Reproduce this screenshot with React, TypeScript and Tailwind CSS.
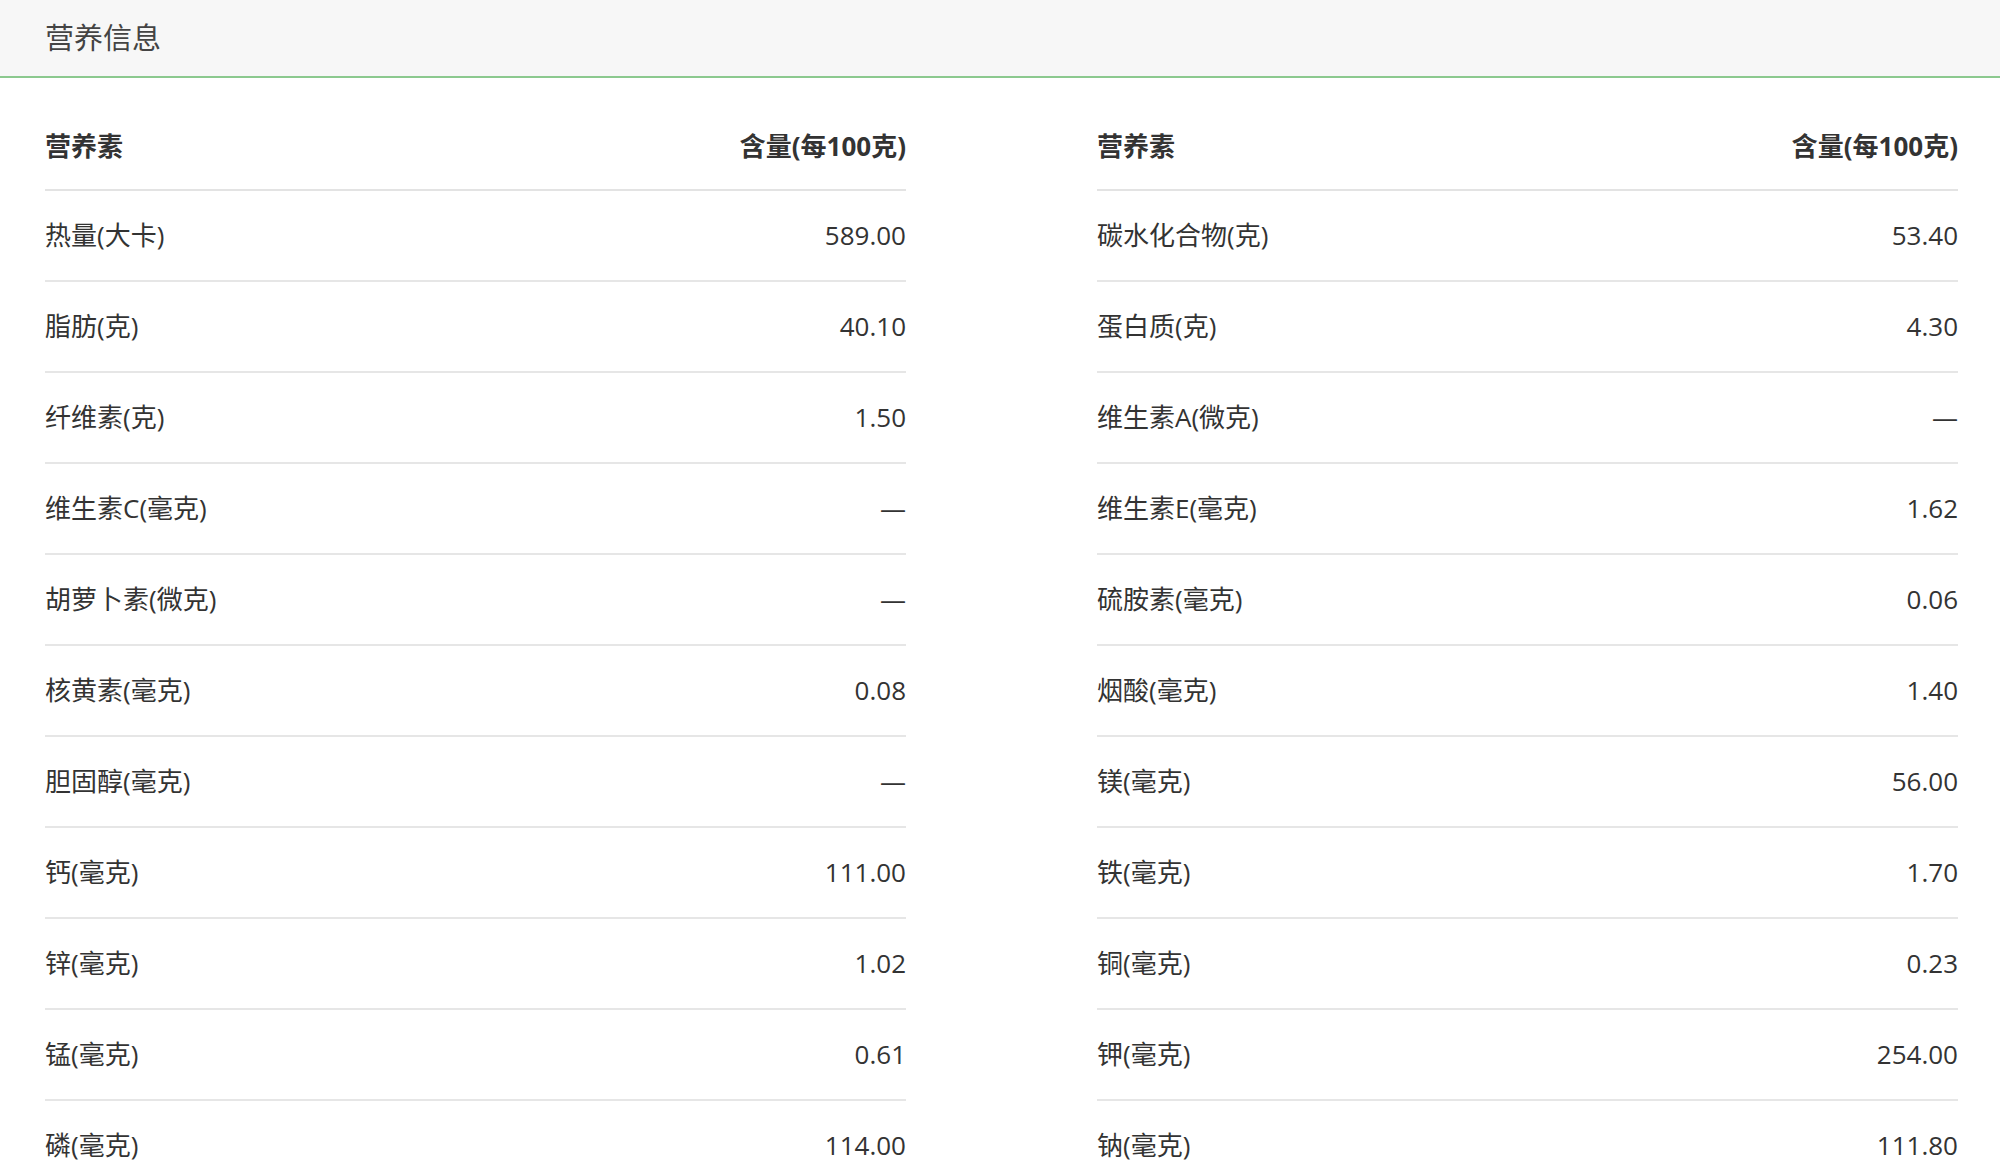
const rows: [string, string, string, string][] = [
  ["热量(大卡)", "589.00", "碳水化合物(克)", "53.40"],
  ["脂肪(克)", "40.10", "蛋白质(克)", "4.30"],
  ["纤维素(克)", "1.50", "维生素A(微克)", "—"],
  ["维生素C(毫克)", "—", "维生素E(毫克)", "1.62"],
  ["胡萝卜素(微克)", "—", "硫胺素(毫克)", "0.06"],
  ["核黄素(毫克)", "0.08", "烟酸(毫克)", "1.40"],
  ["胆固醇(毫克)", "—", "镁(毫克)", "56.00"],
  ["钙(毫克)", "111.00", "铁(毫克)", "1.70"],
  ["锌(毫克)", "1.02", "铜(毫克)", "0.23"],
  ["锰(毫克)", "0.61", "钾(毫克)", "254.00"],
  ["磷(毫克)", "114.00", "钠(毫克)", "111.80"],
];

function Table({ side }: { side: 0 | 1 }) {
  return (
    <div className="w-[861px]">
      <div className="flex h-[88px] items-center justify-between border-b-2 border-[#e3e3e3] font-bold">
        <span>营养素</span>
        <span>含量(每100克)</span>
      </div>
      {rows.map((r) => (
        <div
          key={r[side * 2]}
          className="flex h-[91px] items-center justify-between border-b-2 border-[#e6e6e6]"
        >
          <span>{r[side * 2]}</span>
          <span>{r[side * 2 + 1]}</span>
        </div>
      ))}
    </div>
  );
}

export default function App() {
  return (
    <div
      className="h-[1165px] overflow-hidden bg-white text-[#333] text-[26px]"
      style={{ fontFamily: '"Open Sans", "Noto Sans CJK SC", sans-serif' }}
    >
      <div className="flex h-[78px] items-center border-b-2 border-[#8cc98f] bg-[#f7f7f7] pl-[45px] text-[29px] text-[#444]">
        营养信息
      </div>
      <div className="flex justify-between pl-[45px] pr-[42px] pt-[25px]">
        <Table side={0} />
        <Table side={1} />
      </div>
    </div>
  );
}
